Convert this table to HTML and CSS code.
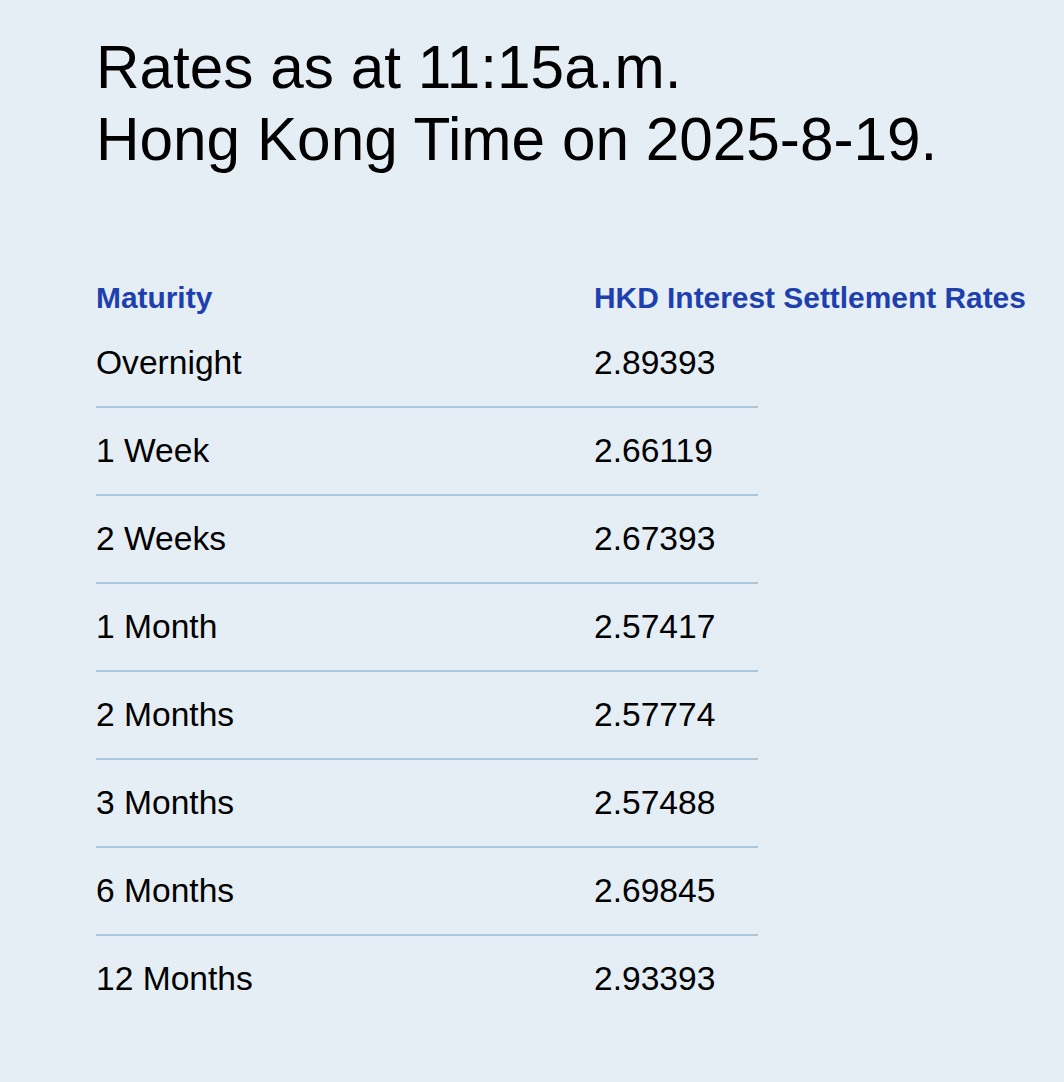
FILE: index.html
```html
<!DOCTYPE html>
<html lang="en">
<head>
<meta charset="utf-8">
<title>HKD Interest Settlement Rates</title>
<link rel="stylesheet" href="styles.css">
</head>
<body>
<main class="page">
  <h1 class="title">Rates as at 11:15a.m.<br>Hong Kong Time on 2025-8-19.</h1>
  <table class="rates">
    <colgroup>
      <col class="col-maturity">
      <col class="col-rate">
    </colgroup>
    <thead>
      <tr>
        <th>Maturity</th>
        <th><span class="nowrap">HKD Interest Settlement Rates</span></th>
      </tr>
    </thead>
    <tbody>
      <tr><td>Overnight</td><td>2.89393</td></tr>
      <tr><td>1 Week</td><td>2.66119</td></tr>
      <tr><td>2 Weeks</td><td>2.67393</td></tr>
      <tr><td>1 Month</td><td>2.57417</td></tr>
      <tr><td>2 Months</td><td>2.57774</td></tr>
      <tr><td>3 Months</td><td>2.57488</td></tr>
      <tr><td>6 Months</td><td>2.69845</td></tr>
      <tr><td>12 Months</td><td>2.93393</td></tr>
    </tbody>
  </table>
</main>
</body>
</html>
```
FILE: styles.css
```css
html, body {
  margin: 0;
  padding: 0;
  background: #e5eef4;
}
body {
  font-family: "Liberation Sans", Arial, Helvetica, sans-serif;
  color: #000;
}
.page {
  padding: 31px 96px 40px;
}
.title {
  margin: 0;
  font-size: 60.3px;
  line-height: 72px;
  font-weight: 400;
}
.rates {
  margin-top: 101px;
  width: 662px;
  table-layout: fixed;
  border-collapse: collapse;
}
.col-maturity { width: 498px; }
.col-rate { width: 164px; }
.rates th {
  height: 44px;
  padding: 0;
  text-align: left;
  vertical-align: middle;
  font-size: 29.9px;
  font-weight: 700;
  color: #1e40af;
  white-space: nowrap;
  overflow: visible;
}
.nowrap { white-space: nowrap; }
.rates td {
  height: 86px;
  padding: 0;
  font-size: 33.6px;
  vertical-align: middle;
  border-bottom: 2px solid #a9c7df;
}
.rates tbody tr:last-child td {
  border-bottom: none;
}
```
